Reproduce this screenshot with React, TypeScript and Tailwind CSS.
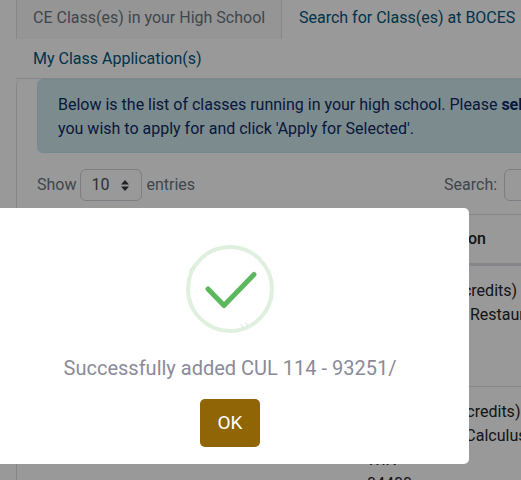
function Tabs() {
  return (
    <div className="pl-4">
      <div className="flex h-[39px]">
        <div className="flex h-full w-[266px] items-center border-x border-[#dee2e6] bg-[#f8f9fa] pb-1 pl-4 text-[#6c757d]">
          CE Class(es) in your High School
        </div>
        <div className="flex items-center pb-1 pl-[17px] whitespace-nowrap text-[#00567a]">Search for Class(es) at BOCES</div>
      </div>
      <div className="flex h-[40px] items-center border-b border-[#dee2e6] pl-[17px] text-[#00567a]">
        My Class Application(s)
      </div>
    </div>
  );
}

function Notice() {
  return (
    <div className="h-[74px] w-[560px] rounded-md border border-[#bee5eb] bg-[#cfe8ed] px-5 py-[13px] leading-6 text-[#0c2a66]">
      <p className="whitespace-nowrap">
        Below is the list of classes running in your high school. Please <b>select</b>
      </p>
      <p className="whitespace-nowrap">you wish to apply for and click 'Apply for Selected'.</p>
    </div>
  );
}

function TableControls() {
  return (
    <div className="mt-4 flex h-[32px] w-[560px] items-center text-[#6c757d]">
      <span>Show</span>
      <div className="ml-1 flex h-[32px] w-[62px] items-center justify-between rounded-md border border-[#ced4da] pl-2.5 pr-3 text-[#495057]">
        <span>10</span>
        <svg width="8" height="11" viewBox="0 0 8 11" className="fill-[#343a40]">
          <path d="M4 0 8 4.5H0zM4 11 0 6.5h8z" />
        </svg>
      </div>
      <span className="ml-1">entries</span>
      <span className="ml-[249px]">Search:</span>
      <div className="ml-[7px] h-[32px] w-[60px] shrink-0 rounded-md border border-[#ced4da]" />
    </div>
  );
}

function TableRow({ lines }: { lines: string[] }) {
  return (
    <div className="h-[121px] border-b border-[#dee2e6] pl-[350px] pt-[13px] leading-6 text-[#212529]">
      {lines.map((line) => (
        <p key={line} className="whitespace-nowrap">
          {line}
        </p>
      ))}
    </div>
  );
}

function ClassTable() {
  return (
    <div className="mt-[13px] w-[560px] -ml-5">
      <div className="flex h-[49px] items-center border-t border-[#dee2e6] pl-[350px] font-medium text-[#212529]">
        <span className="whitespace-nowrap pl-[101px]">on</span>
      </div>
      <div className="h-[3px] bg-[#dee2e6]" />
      <TableRow lines={["CUL 114 (3.0 credits)", "Foundation of Restaurant"]} />
      <TableRow lines={["MAT 125 (3.0 credits)", "Applied Math Calculus", "WIN", "04400"]} />
    </div>
  );
}

function SuccessIcon() {
  return (
    <svg width="88" height="88" viewBox="0 0 88 88" fill="none">
      <circle cx="44" cy="44" r="42" stroke="#dff0de" strokeWidth="4" />
      <path d="M22 44 38 60.500 68 29.500" stroke="#5cb85c" strokeWidth="5" strokeLinecap="round" strokeLinejoin="round" />
      <path d="M3.500 25.500 7 21.500M57 83 54.500 79M62 81 59.500 77.500" stroke="#b9cdb8" strokeWidth="0.500" />
    </svg>
  );
}

function SuccessDialog() {
  return (
    <div className="absolute inset-0 overflow-hidden bg-black/40">
      <div className="absolute -left-[9px] top-[208px] flex h-[256px] w-[478px] flex-col items-center rounded-[5px] bg-white pt-[37px]">
        <SuccessIcon />
        <p className="mt-[22px] text-[20px] leading-[27px] text-[#8a8a9a]">Successfully added CUL 114 - 93251/</p>
        <button type="button" className="mt-[17px] h-[48px] w-[60px] rounded-[5px] bg-[#8f6505] text-[19px] text-white">
          OK
        </button>
      </div>
    </div>
  );
}

export default function App() {
  return (
    <div className="relative h-[480px] w-[521px] overflow-hidden bg-white font-['Roboto',sans-serif] text-base">
      <Tabs />
      <div className="ml-4 rounded-tl-md border-l border-[#dee2e6] pl-5">
        <Notice />
        <TableControls />
        <ClassTable />
      </div>
      <SuccessDialog />
    </div>
  );
}
